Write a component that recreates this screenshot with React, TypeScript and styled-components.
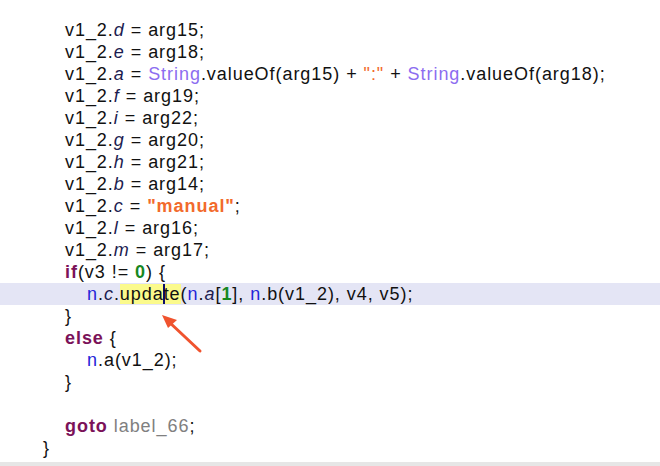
import * as React from "react";
import styled, {createGlobalStyle} from "styled-components";

const Global = createGlobalStyle`
    html, body { margin: 0; padding: 0; background: #fff; }
    body { width: 660px; height: 466px; overflow: hidden; }
`;

const Editor = styled.div`
    position: relative;
    width: 660px;
    height: 466px;
    padding-top: 19px;
    box-sizing: border-box;
    font-family: "Liberation Sans", Arial, sans-serif;
    font-size: 18px;
    letter-spacing: 0.95px;
    color: #111;
    overflow: hidden;
`;

const Line = styled.div<{ $indent: number; $current?: boolean }>`
    height: 22px;
    line-height: 22px;
    padding-left: ${p => 43 + p.$indent * 22}px;
    white-space: pre;
    background: ${p => p.$current ? "#e4e5f5" : "transparent"};
`;

const Field = styled.span` font-style: italic; color: #1c1c50; `;
const Cls = styled.span` color: #8c6cf0; `;
const Str = styled.span<{ $bold?: boolean }>`
    color: #f26a2c;
    font-weight: ${p => p.$bold ? "bold" : "normal"};
`;
const Num = styled.span` color: #17871f; font-weight: bold; `;
const Kw = styled.span` color: #7b1259; font-weight: bold; `;
const Pkg = styled.span` color: #2424d8; `;
const Label = styled.span` color: #808080; `;
const Mark = styled.span` background: #fbfa8c; `;
const Caret = styled.span`
    display: inline-block;
    width: 2px;
    height: 20px;
    vertical-align: -4px;
    background: #0d0d6a;
    margin: 0 -1px;
`;

const BottomBar = styled.div`
    position: absolute;
    left: 0; right: 0; bottom: 0;
    height: 4px;
    background: #e6e6e6;
`;

const Arrow = styled.svg`
    position: absolute;
    left: 150px;
    top: 306px;
`;

const assign = (f: string, rhs: React.ReactNode) =>
    <Line $indent={1}>v1_2.<Field>{f}</Field> = {rhs};</Line>;

export default function App() {
    return <Editor>
        <Global/>
        {assign("d", "arg15")}
        {assign("e", "arg18")}
        {assign("a", <><Cls>String</Cls>.valueOf(arg15) + <Str>":"</Str> + <Cls>String</Cls>.valueOf(arg18)</>)}
        {assign("f", "arg19")}
        {assign("i", "arg22")}
        {assign("g", "arg20")}
        {assign("h", "arg21")}
        {assign("b", "arg14")}
        {assign("c", <Str $bold>"manual"</Str>)}
        {assign("l", "arg16")}
        {assign("m", "arg17")}
        <Line $indent={1}><Kw>if</Kw>(v3 != <Num>0</Num>) {"{"}</Line>
        <Line $indent={2} $current>
            <Pkg>n</Pkg>.<Field>c</Field>.<Mark>upda<Caret/>te</Mark>(<Pkg>n</Pkg>.<Field>a</Field>[<Num>1</Num>], <Pkg>n</Pkg>.b(v1_2), v4, v5);
        </Line>
        <Line $indent={1}>{"}"}</Line>
        <Line $indent={1}><Kw>else</Kw> {"{"}</Line>
        <Line $indent={2}><Pkg>n</Pkg>.a(v1_2);</Line>
        <Line $indent={1}>{"}"}</Line>
        <Line $indent={1}/>
        <Line $indent={1}><Kw>goto</Kw> <Label>label_66</Label>;</Line>
        <Line $indent={0}>{"}"}</Line>
        <Arrow width="60" height="52" viewBox="0 0 60 52">
            <line x1="50" y1="45" x2="18" y2="15" stroke="#f0532e" strokeWidth="3" strokeLinecap="round"/>
            <polygon points="12,9 27,14 18,22" fill="#f0532e"/>
        </Arrow>
        <BottomBar/>
    </Editor>;
}
